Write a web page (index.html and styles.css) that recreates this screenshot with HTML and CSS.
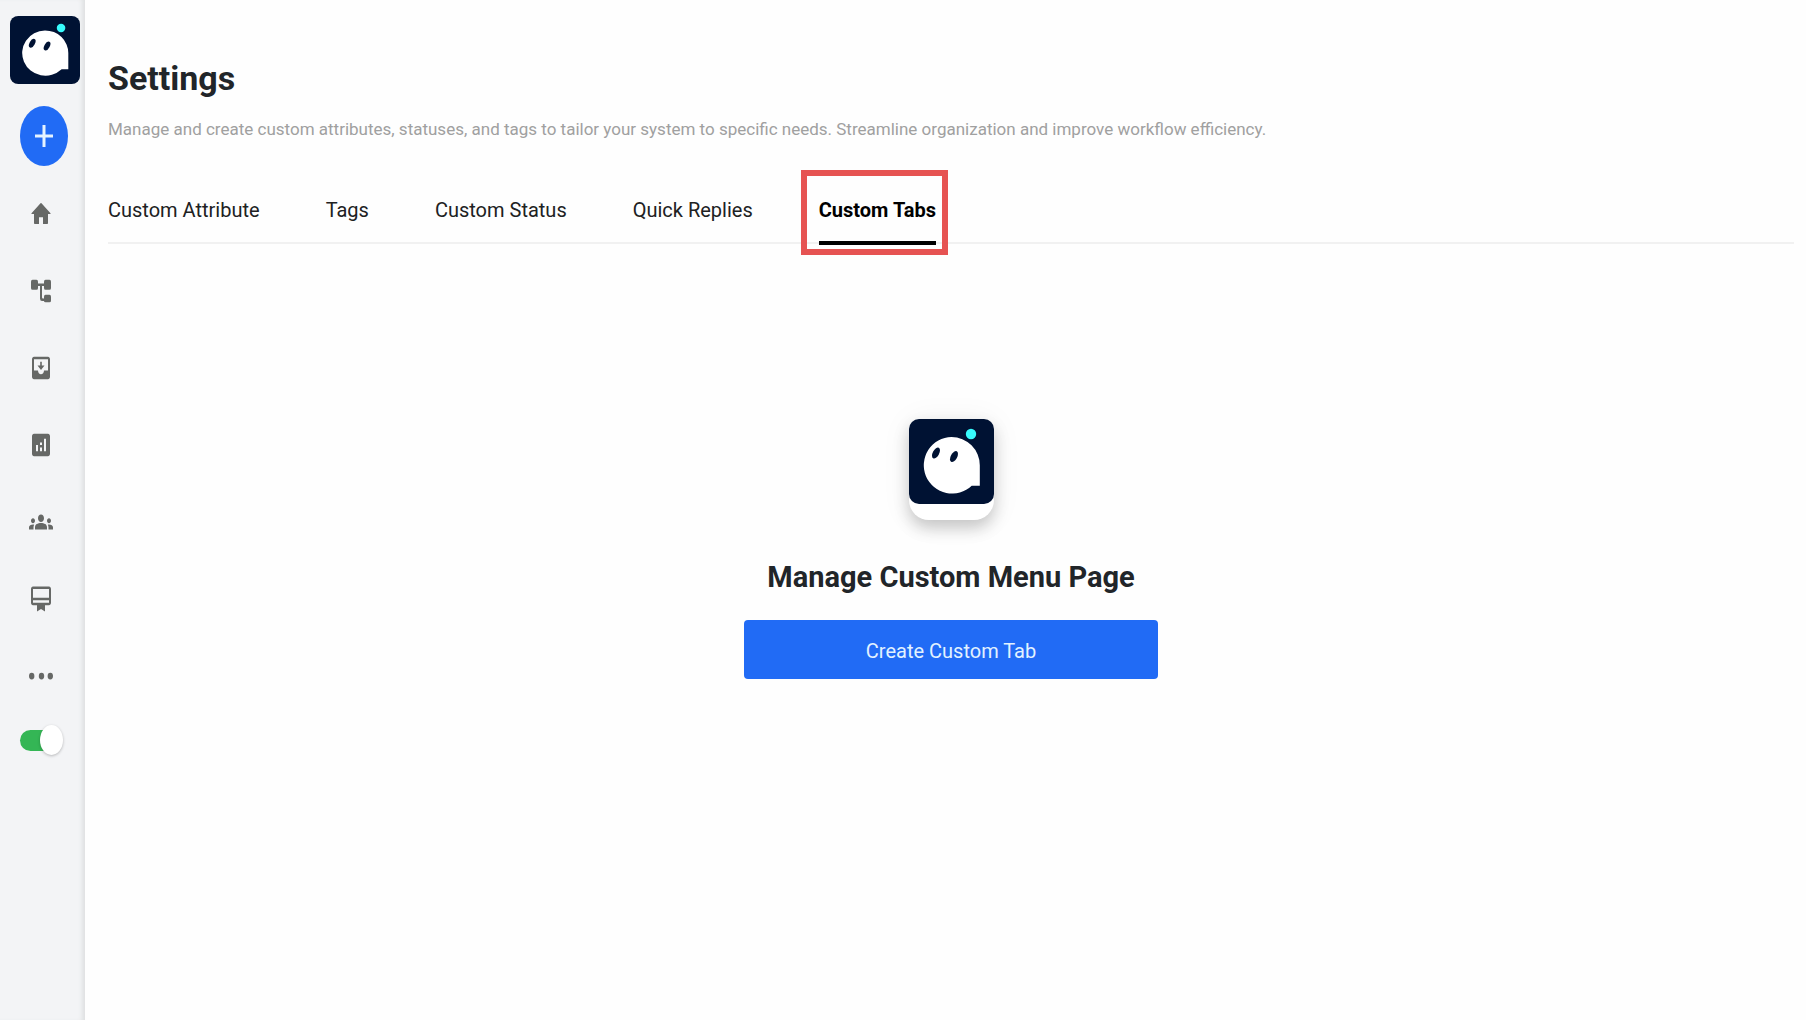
FILE: index.html
```html
<!DOCTYPE html>
<html lang="en">
<head>
<meta charset="utf-8">
<meta name="viewport" content="width=device-width, initial-scale=1">
<title>Settings</title>
<link rel="stylesheet" href="styles.css">
</head>
<body>
<svg class="sprite" aria-hidden="true">
  <symbol id="logo" viewBox="0 0 85 85" preserveAspectRatio="none">
    <rect width="85" height="85" rx="10" fill="#001233"/>
    <path d="M42.500 18A28.300 28.300 0 1 0 62.700 66.700H70.800V46.300A28.300 28.300 0 0 0 42.500 18Z" fill="#fff"/>
    <ellipse cx="27" cy="34" rx="3.200" ry="6" transform="rotate(28 27 34)" fill="#001233"/>
    <ellipse cx="45" cy="37.500" rx="3.200" ry="6" transform="rotate(28 45 37.500)" fill="#001233"/>
    <circle cx="62" cy="15" r="5.200" fill="#37fbfd"/>
  </symbol>
</svg>
<div class="app">
  <aside class="sidebar">
    <a class="brand" href="#" aria-label="Home page"><svg class="brand-logo"><use href="#logo"/></svg></a>
    <button class="add" type="button" aria-label="Add">
      <svg viewBox="0 0 18 22" aria-hidden="true"><path d="M9 0V22M0 11H18" stroke="#e6f3ff" stroke-width="3" fill="none"/></svg>
    </button>
    <nav class="nav" aria-label="Main">
      <a href="#" aria-label="Home"><svg viewBox="0 0 24 24" preserveAspectRatio="none"><path d="M10 20v-5.500h4V20h4.300q.7 0 .7-.8V12h2.300q.5-.2.200-.6L12.500 3.300q-.5-.4-1 0L2.500 11.400q-.3.4.2.6H5v7.200q0 .8.700.8z"/></svg></a>
      <a href="#" aria-label="Flows"><svg viewBox="0 0 24 24" preserveAspectRatio="none"><path d="M16.500 3h4q1.500 0 1.500 1.500v5q0 1.500-1.500 1.500h-4Q15 11 15 9.500V8h-2v9q0 1 1 1h1v-1.500q0-1.500 1.500-1.500h4q1.500 0 1.500 1.500v3q0 1.500-1.500 1.500h-4Q15 21 15 20h-2q-2 0-2-2V8H9v1.500Q9 11 7.500 11h-4Q2 11 2 9.500v-5Q2 3 3.500 3h4Q9 3 9 4.500V6h6V4.500Q15 3 16.500 3z"/></svg></a>
      <a href="#" aria-label="Inbox"><svg viewBox="0 0 24 24" preserveAspectRatio="none"><path d="M15.500 10h-2.700V7h-1.600v3H8.500l3.500 3.500zM19 3H5c-1.100 0-2 .9-2 2v14c0 1.100.9 2 2 2h14c1.100 0 2-.9 2-2V5c0-1.100-.9-2-2-2zm0 11h-4c0 1.660-1.340 3-3 3s-3-1.340-3-3H5V5h14z"/></svg></a>
      <a href="#" aria-label="Reports"><svg viewBox="0 0 24 24" preserveAspectRatio="none"><path d="M19 3H5c-1.100 0-2 .9-2 2v14c0 1.100.9 2 2 2h14c1.100 0 2-.9 2-2V5c0-1.100-.9-2-2-2zM9 17H7v-5h2zm4 0h-2v-3h2zm0-5h-2v-2h2zm4 5h-2V7h2z"/></svg></a>
      <a href="#" aria-label="Contacts"><svg viewBox="0 0 24 24" preserveAspectRatio="none"><path d="M12 12.750c1.630 0 3.070.39 4.240.9 1.080.48 1.760 1.560 1.760 2.730V18H6v-1.610c0-1.180.68-2.260 1.760-2.730 1.170-.52 2.610-.91 4.240-.91zM4 13c1.100 0 2-.9 2-2s-.9-2-2-2-2 .9-2 2 .9 2 2 2zm1.130 1.100C4.760 14.040 4.390 14 4 14c-.99 0-1.930.21-2.780.58C.48 14.900 0 15.620 0 16.430V18h4.500v-1.610c0-.83.23-1.610.63-2.290zM20 13c1.100 0 2-.9 2-2s-.9-2-2-2-2 .9-2 2 .9 2 2 2zm4 3.430c0-.81-.48-1.530-1.220-1.850A6.950 6.950 0 0 0 20 14c-.39 0-.76.040-1.130.1.400.68.630 1.460.63 2.290V18H24zM12 6c1.660 0 3 1.340 3 3s-1.340 3-3 3-3-1.340-3-3 1.340-3 3-3z"/></svg></a>
      <a href="#" aria-label="Membership"><svg viewBox="0 0 24 24" preserveAspectRatio="none"><path d="M20 2H4c-1.110 0-2 .89-2 2v11c0 1.110.89 2 2 2h4v5l4-2 4 2v-5h4c1.110 0 2-.89 2-2V4c0-1.110-.89-2-2-2zm0 13H4v-2h16zm0-4H4V4h16z"/></svg></a>
      <a href="#" aria-label="More"><svg viewBox="0 0 24 24" preserveAspectRatio="none"><circle cx="2.700" cy="12" r="2.700"/><circle cx="12.500" cy="12" r="2.700"/><circle cx="21.300" cy="12" r="2.700"/></svg></a>
    </nav>
    <input class="toggle" type="checkbox" role="switch" aria-label="Availability" checked>
  </aside>
  <main class="main">
    <h1>Settings</h1>
    <p class="lead">Manage and create custom attributes, statuses, and tags to tailor your system to specific needs. Streamline organization and improve workflow efficiency.</p>
    <nav class="tabs" aria-label="Settings sections">
      <a href="#">Custom Attribute</a>
      <a href="#">Tags</a>
      <a href="#">Custom Status</a>
      <a href="#">Quick Replies</a>
      <a href="#" class="active" aria-current="page">Custom Tabs</a>
    </nav>
    <section class="empty">
      <div class="empty-card"><svg class="empty-logo" aria-hidden="true"><use href="#logo"/></svg></div>
      <h2>Manage Custom Menu Page</h2>
      <button class="create" type="button">Create Custom Tab</button>
    </section>
  </main>
</div>
</body>
</html>
```
FILE: styles.css
```css
* {
  box-sizing: border-box;
}

body {
  margin: 0;
  background: #fefefe;
  color: #212529;
  font-family: Roboto, "Liberation Sans", sans-serif;
}

a {
  color: inherit;
  text-decoration: none;
}

h1, h2, p {
  margin: 0;
}

.sprite {
  position: absolute;
  width: 0;
  height: 0;
}

.app {
  display: flex;
  min-height: 100vh;
}

.sidebar {
  display: flex;
  flex-direction: column;
  flex: none;
  width: 85px;
  padding: 16px 0 0 10px;
  background: #f3f4f6;
  box-shadow: inset -5px 0 4px -2px #dfe1e2;
}

.brand {
  display: flex;
}

.brand-logo {
  width: 70px;
  height: 68px;
}

.add {
  display: flex;
  align-items: center;
  justify-content: center;
  width: 48px;
  height: 60px;
  margin: 22px 0 0 10px;
  padding: 0;
  border: 0;
  border-radius: 50%;
  background: #216bf5;
}

.add svg {
  width: 18px;
  height: 22px;
}

.nav {
  display: flex;
  flex-direction: column;
  gap: 47px;
  margin: 33px 0 0 19px;
}

.nav a {
  display: flex;
}

.nav svg {
  width: 24px;
  height: 30px;
  fill: #666866;
}

.toggle {
  appearance: none;
  position: relative;
  width: 43px;
  height: 21px;
  margin: 39px 0 0 10px;
  border-radius: 11px;
  background: linear-gradient(90deg, #34b655 30px, transparent 30px);
}

.toggle::after {
  content: "";
  position: absolute;
  top: -5px;
  right: 0;
  width: 23px;
  height: 30px;
  border-radius: 50%;
  background: #fff;
  box-shadow: 0 1px 3px rgb(0 0 0 / 25%);
}

.main {
  flex: 1;
  min-width: 0;
  padding: 54px 12px 54px 23px;
}

h1 {
  font-size: 34px;
  line-height: 48px;
}

.lead {
  margin-top: 12px;
  color: #a0a0a0;
  font-size: 17px;
  line-height: 30px;
}

.tabs {
  display: flex;
  gap: 66px;
  margin-top: 50px;
  border-bottom: 2px solid #f1f1f1;
  color: #202122;
  font-size: 20px;
  line-height: 32px;
}

.tabs a {
  position: relative;
  padding-bottom: 15px;
}

.tabs .active {
  margin-bottom: -3px;
  border-bottom: 4px solid #000;
  color: #000;
  font-weight: bold;
}

.tabs .active::after {
  content: "";
  position: absolute;
  inset: -24px -12px -14px -18px;
  border: 6px solid #e65352;
}

.empty {
  display: flex;
  flex-direction: column;
  align-items: center;
  margin-top: 175px;
}

.empty-card {
  height: 101px;
  border-radius: 10px 10px 20px 20px;
  background: #fff;
  box-shadow: 0 8px 16px rgb(0 0 0 / 20%), 0 2px 32px rgb(0 0 0 / 6%);
}

.empty-logo {
  display: block;
  width: 85px;
  height: 85px;
}

h2 {
  margin-top: 36px;
  font-size: 29px;
  line-height: 42px;
}

.create {
  width: 414px;
  max-width: 100%;
  height: 59px;
  margin-top: 22px;
  padding: 2px 0 0;
  border: 0;
  border-radius: 4px;
  background: #216bf5;
  color: #e2f2ff;
  font: inherit;
  font-size: 20px;
}
```
